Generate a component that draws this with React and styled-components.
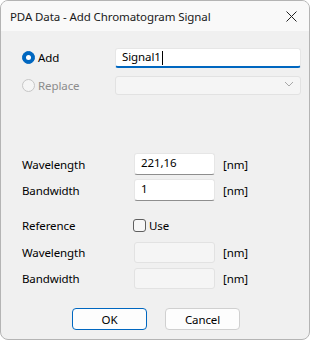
import React from 'react'
import styled, { createGlobalStyle } from 'styled-components'

const GlobalStyle = createGlobalStyle`
  body {
    margin: 0;
    background: #ffffff;
    font-family: "Noto Sans", "Open Sans", sans-serif;
    font-size: 11.5px;
    letter-spacing: -0.1px;
    color: #000;
  }
`

const Window = styled.div`
  width: 310px;
  height: 340px;
  border: 1px solid #b4b4b4;
  border-radius: 8px;
  overflow: hidden;
  background: #f0f0f0;
  display: flex;
  flex-direction: column;
  box-sizing: border-box;
`

const TitleBar = styled.div`
  height: 30px;
  flex: none;
  background: #f9f9f9;
  display: flex;
  align-items: center;
  justify-content: space-between;
  padding: 0 8px 0 9px;
  color: #1a1a1a;
`

const CloseBtn = styled.div`
  width: 20px;
  height: 20px;
  display: flex;
  align-items: center;
  justify-content: center;
`

const Body = styled.div`
  padding: 17px 0 0 21px;
  display: flex;
  flex-direction: column;
`

const TopRow = styled.div`
  display: grid;
  grid-template-columns: 93px 186px;
  align-items: center;
  height: ${p => p.h}px;
  margin-top: ${p => p.mt || 0}px;
`

const Row = styled.div`
  display: grid;
  grid-template-columns: 112px 81px auto;
  align-items: center;
  height: ${p => p.h}px;
  margin-top: ${p => p.mt || 0}px;
`

const Label = styled.span`
  display: flex;
  align-items: center;
  gap: 3px;
  color: ${p => (p.disabled ? '#8c8c8c' : '#000')};
  white-space: nowrap;
`

const RadioDot = styled.span`
  width: 13px;
  height: 13px;
  border-radius: 50%;
  box-sizing: border-box;
  flex: none;
  background: ${p => (p.checked ? '#0067c0' : '#f5f5f5')};
  border: 1px solid ${p => (p.checked ? '#0067c0' : '#c6c6c6')};
  display: flex;
  align-items: center;
  justify-content: center;
  &::after {
    content: '';
    display: ${p => (p.checked ? 'block' : 'none')};
    width: 5px;
    height: 5px;
    border-radius: 50%;
    background: #fff;
  }
`

const Check = styled.span`
  width: 13px;
  height: 13px;
  box-sizing: border-box;
  border: 1px solid #5f5f5f;
  border-radius: 3px;
  background: #f7f7f7;
  margin-left: -1px;
  flex: none;
`

const TextBox = styled.div`
  height: 100%;
  box-sizing: border-box;
  background: ${p => (p.disabled ? '#f5f5f5' : '#ffffff')};
  border: 1px solid ${p => (p.disabled ? '#e2e2e2' : '#e6e6e6')};
  border-bottom: ${p =>
    p.focus ? '2px solid #0067c0' : p.disabled ? '1px solid #e2e2e2' : '1px solid #8e8e8e'};
  border-radius: 3px;
  padding: 0 6px;
  display: flex;
  align-items: center;
  justify-content: space-between;
  padding-bottom: ${p => (p.focus ? 1 : 3)}px;
`

const Caret = styled.span`
  display: inline-block;
  width: 1px;
  height: 14px;
  background: #000;
  vertical-align: middle;
  margin-left: 1px;
`

const Unit = styled.span`
  color: #000;
  margin-left: 8px;
`

const Buttons = styled.div`
  display: flex;
  gap: 18px;
  justify-content: center;
  margin: 19px 0 0 -21px;
  padding-left: 2px;
`

const Button = styled.div`
  width: 75px;
  height: 22px;
  box-sizing: border-box;
  background: #fdfdfd;
  border: 1px solid ${p => (p.primary ? '#0067c0' : '#d0d0d0')};
  border-radius: 4px;
  display: flex;
  align-items: center;
  justify-content: center;
  color: #000;
`

const Chevron = () => (
  <svg width="10" height="6" viewBox="0 0 10 6">
    <path d="M1 1 L5 5 L9 1" fill="none" stroke="#a8a8a8" strokeWidth="1" />
  </svg>
)

const App = () => {
  return (
    <>
      <GlobalStyle />
      <Window>
        <TitleBar>
          <span>PDA Data - Add Chromatogram Signal</span>
          <CloseBtn>
            <svg width="11" height="11" viewBox="0 0 11 11">
              <path d="M0.5 0.5 L10.5 10.5 M10.5 0.5 L0.5 10.5" stroke="#222" strokeWidth="1" />
            </svg>
          </CloseBtn>
        </TitleBar>
        <Body>
          <TopRow h={18}>
            <Label><RadioDot checked />Add</Label>
            <TextBox focus>
              <span>Signal1<Caret /></span>
            </TextBox>
          </TopRow>
          <TopRow h={19} mt={10}>
            <Label disabled><RadioDot />Replace</Label>
            <TextBox disabled>
              <span />
              <Chevron />
            </TextBox>
          </TopRow>

          <Row h={22} mt={58}>
            <Label>Wavelength</Label>
            <TextBox>221,16</TextBox>
            <Unit>[nm]</Unit>
          </Row>
          <Row h={22} mt={4}>
            <Label>Bandwidth</Label>
            <TextBox>1</TextBox>
            <Unit>[nm]</Unit>
          </Row>
          <Row h={14} mt={17}>
            <Label>Reference</Label>
            <Label><Check />Use</Label>
          </Row>
          <Row h={21} mt={10}>
            <Label>Wavelength</Label>
            <TextBox disabled />
            <Unit>[nm]</Unit>
          </Row>
          <Row h={21} mt={5}>
            <Label>Bandwidth</Label>
            <TextBox disabled />
            <Unit>[nm]</Unit>
          </Row>

          <Buttons>
            <Button primary>OK</Button>
            <Button>Cancel</Button>
          </Buttons>
        </Body>
      </Window>
    </>
  )
}

export default App
